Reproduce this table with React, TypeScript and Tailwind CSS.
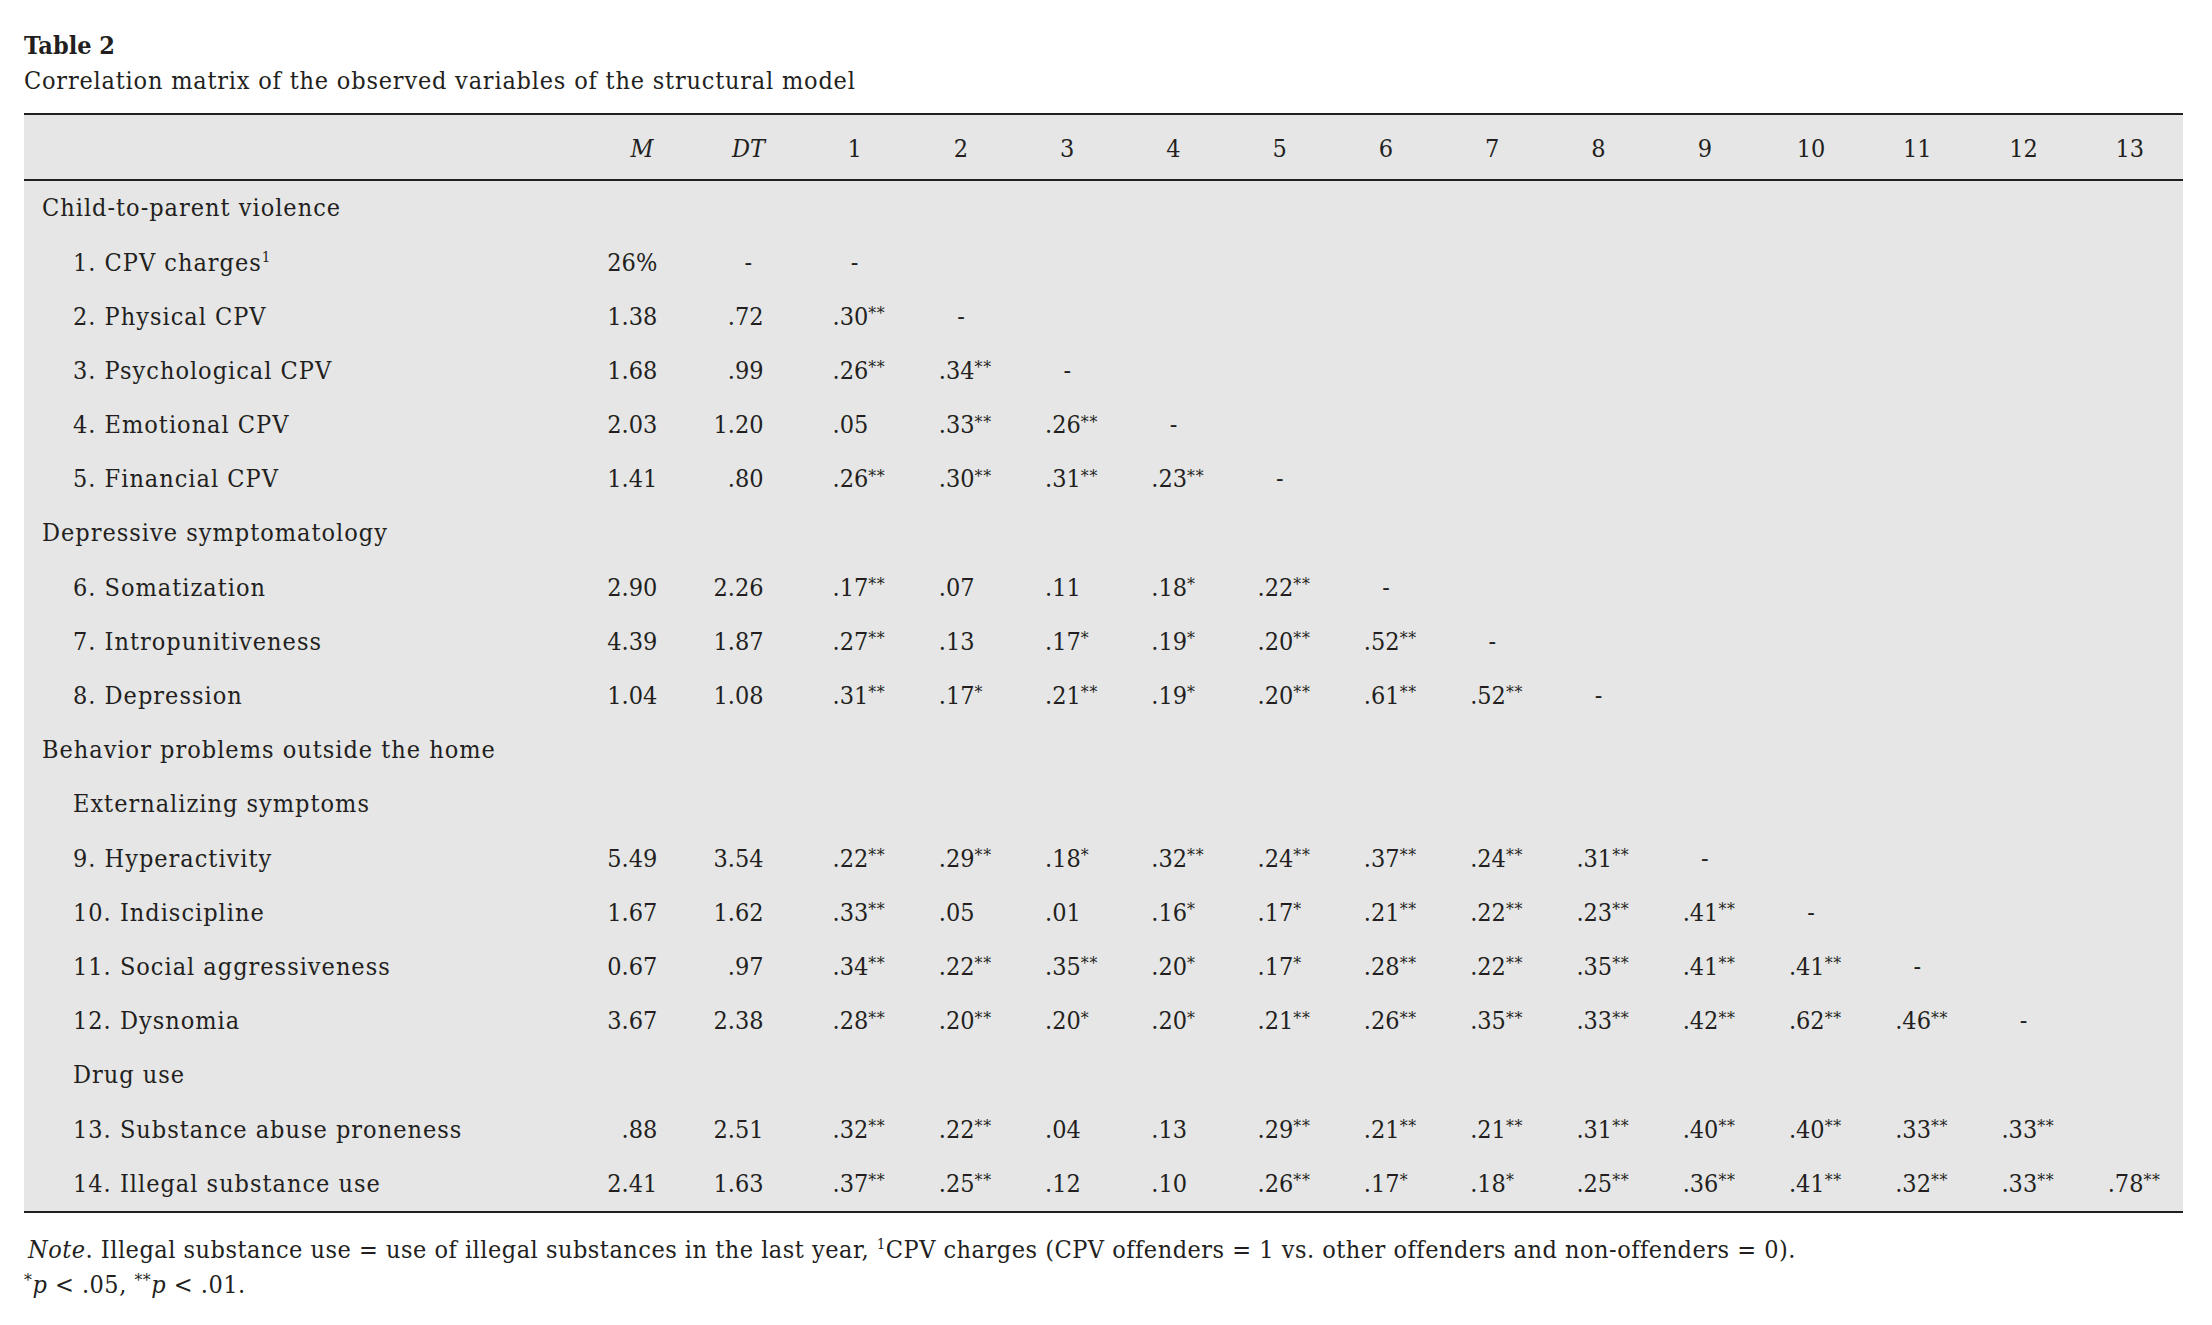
import React from "react";

type Row =
  | { kind: "section"; label: string; indent?: boolean }
  | { kind: "item"; label: React.ReactNode; m: string; dt: string; vals: string[] };

const rows: Row[] = [
  { kind: "section", label: "Child-to-parent violence" },
  { kind: "item", label: <>1. CPV charges<sup className="text-[0.6em] relative -top-[0.55em]">1</sup></>, m: "26%", dt: "-", vals: ["-"] },
  { kind: "item", label: "2. Physical CPV", m: "1.38", dt: ".72", vals: [".30**", "-"] },
  { kind: "item", label: "3. Psychological CPV", m: "1.68", dt: ".99", vals: [".26**", ".34**", "-"] },
  { kind: "item", label: "4. Emotional CPV", m: "2.03", dt: "1.20", vals: [".05", ".33**", ".26**", "-"] },
  { kind: "item", label: "5. Financial CPV", m: "1.41", dt: ".80", vals: [".26**", ".30**", ".31**", ".23**", "-"] },
  { kind: "section", label: "Depressive symptomatology" },
  { kind: "item", label: "6. Somatization", m: "2.90", dt: "2.26", vals: [".17**", ".07", ".11", ".18*", ".22**", "-"] },
  { kind: "item", label: "7. Intropunitiveness", m: "4.39", dt: "1.87", vals: [".27**", ".13", ".17*", ".19*", ".20**", ".52**", "-"] },
  { kind: "item", label: "8. Depression", m: "1.04", dt: "1.08", vals: [".31**", ".17*", ".21**", ".19*", ".20**", ".61**", ".52**", "-"] },
  { kind: "section", label: "Behavior problems outside the home" },
  { kind: "section", label: "Externalizing symptoms", indent: true },
  { kind: "item", label: "9. Hyperactivity", m: "5.49", dt: "3.54", vals: [".22**", ".29**", ".18*", ".32**", ".24**", ".37**", ".24**", ".31**", "-"] },
  { kind: "item", label: "10. Indiscipline", m: "1.67", dt: "1.62", vals: [".33**", ".05", ".01", ".16*", ".17*", ".21**", ".22**", ".23**", ".41**", "-"] },
  { kind: "item", label: "11. Social aggressiveness", m: "0.67", dt: ".97", vals: [".34**", ".22**", ".35**", ".20*", ".17*", ".28**", ".22**", ".35**", ".41**", ".41**", "-"] },
  { kind: "item", label: "12. Dysnomia", m: "3.67", dt: "2.38", vals: [".28**", ".20**", ".20*", ".20*", ".21**", ".26**", ".35**", ".33**", ".42**", ".62**", ".46**", "-"] },
  { kind: "section", label: "Drug use", indent: true },
  { kind: "item", label: "13. Substance abuse proneness", m: ".88", dt: "2.51", vals: [".32**", ".22**", ".04", ".13", ".29**", ".21**", ".21**", ".31**", ".40**", ".40**", ".33**", ".33**"] },
  { kind: "item", label: "14. Illegal substance use", m: "2.41", dt: "1.63", vals: [".37**", ".25**", ".12", ".10", ".26**", ".17*", ".18*", ".25**", ".36**", ".41**", ".32**", ".33**", ".78**"] },
];

function Val({ v }: { v: string }) {
  const m = v.match(/^([^*]*)(\**)$/);
  const base = m ? m[1] : v;
  const stars = m ? m[2] : "";
  return (
    <>
      {base}
      {stars && <sup className="text-[0.7em] relative -top-[0.32em] tracking-[0.04em]">{stars}</sup>}
    </>
  );
}

function Cell({ v }: { v: string }) {
  if (v === "-") return <div className="text-center">-</div>;
  return (
    <div className="pl-[31px] whitespace-nowrap">
      <Val v={v} />
    </div>
  );
}

export default function App() {
  const grid = "grid grid-cols-[565px_repeat(15,minmax(0,1fr))] items-center";
  return (
    <div
      className="w-[2212px] h-[1325px] bg-white text-[#231f20] pl-[24px] pt-[28px] text-[25px]"
      style={{ fontFamily: '"DejaVu Serif Condensed", "DejaVu Serif", serif' }}
    >
      <div className="leading-[35px] font-bold">Table 2</div>
      <div className="leading-[35px] tracking-[0.8px]">Correlation matrix of the observed variables of the structural model</div>
      <div className="w-[2159px] mt-[15px] bg-[#e6e6e6] border-t-2 border-b-2 border-[#231f20]">
        <div className={`${grid} h-[66px] border-b-2 border-[#231f20] pt-[3px]`}>
          <div />
          <div className="text-center italic">M</div>
          <div className="text-center italic">DT</div>
          {Array.from({ length: 13 }, (_, i) => (
            <div key={i} className="text-center">{i + 1}</div>
          ))}
        </div>
        {rows.map((r, idx) =>
          r.kind === "section" ? (
            <div key={idx} className={`${grid} h-[54.2px]`}>
              <div className={`${r.indent ? "pl-[49px]" : "pl-[18px]"} tracking-[1px] whitespace-nowrap`}>{r.label}</div>
            </div>
          ) : (
            <div key={idx} className={`${grid} h-[54.2px]`}>
              <div className="pl-[49px] whitespace-nowrap tracking-[1px]">{r.label}</div>
              {r.m === "-" ? <div className="text-center">-</div> : <div className="text-right pr-[38px]">{r.m}</div>}
              {r.dt === "-" ? <div className="text-center">-</div> : <div className="text-right pr-[38px]">{r.dt}</div>}
              {Array.from({ length: 13 }, (_, i) => (
                <div key={i}>{r.vals[i] !== undefined ? <Cell v={r.vals[i]} /> : null}</div>
              ))}
            </div>
          )
        )}
      </div>
      <div className="mt-[19px] leading-[35px] pl-[4px] tracking-[0.5px]">
        <span className="italic">Note</span>. Illegal substance use = use of illegal substances in the last year,{" "}
        <sup className="text-[0.6em] relative -top-[0.55em]">1</sup>CPV charges (CPV offenders = 1 vs. other offenders and non-offenders = 0).
      </div>
      <div className="leading-[35px] tracking-[0.5px]">
        <sup className="text-[0.7em] relative -top-[0.35em]">*</sup>
        <span className="italic">p</span> &lt; .05, <sup className="text-[0.7em] relative -top-[0.35em]">**</sup>
        <span className="italic">p</span> &lt; .01.
      </div>
    </div>
  );
}
